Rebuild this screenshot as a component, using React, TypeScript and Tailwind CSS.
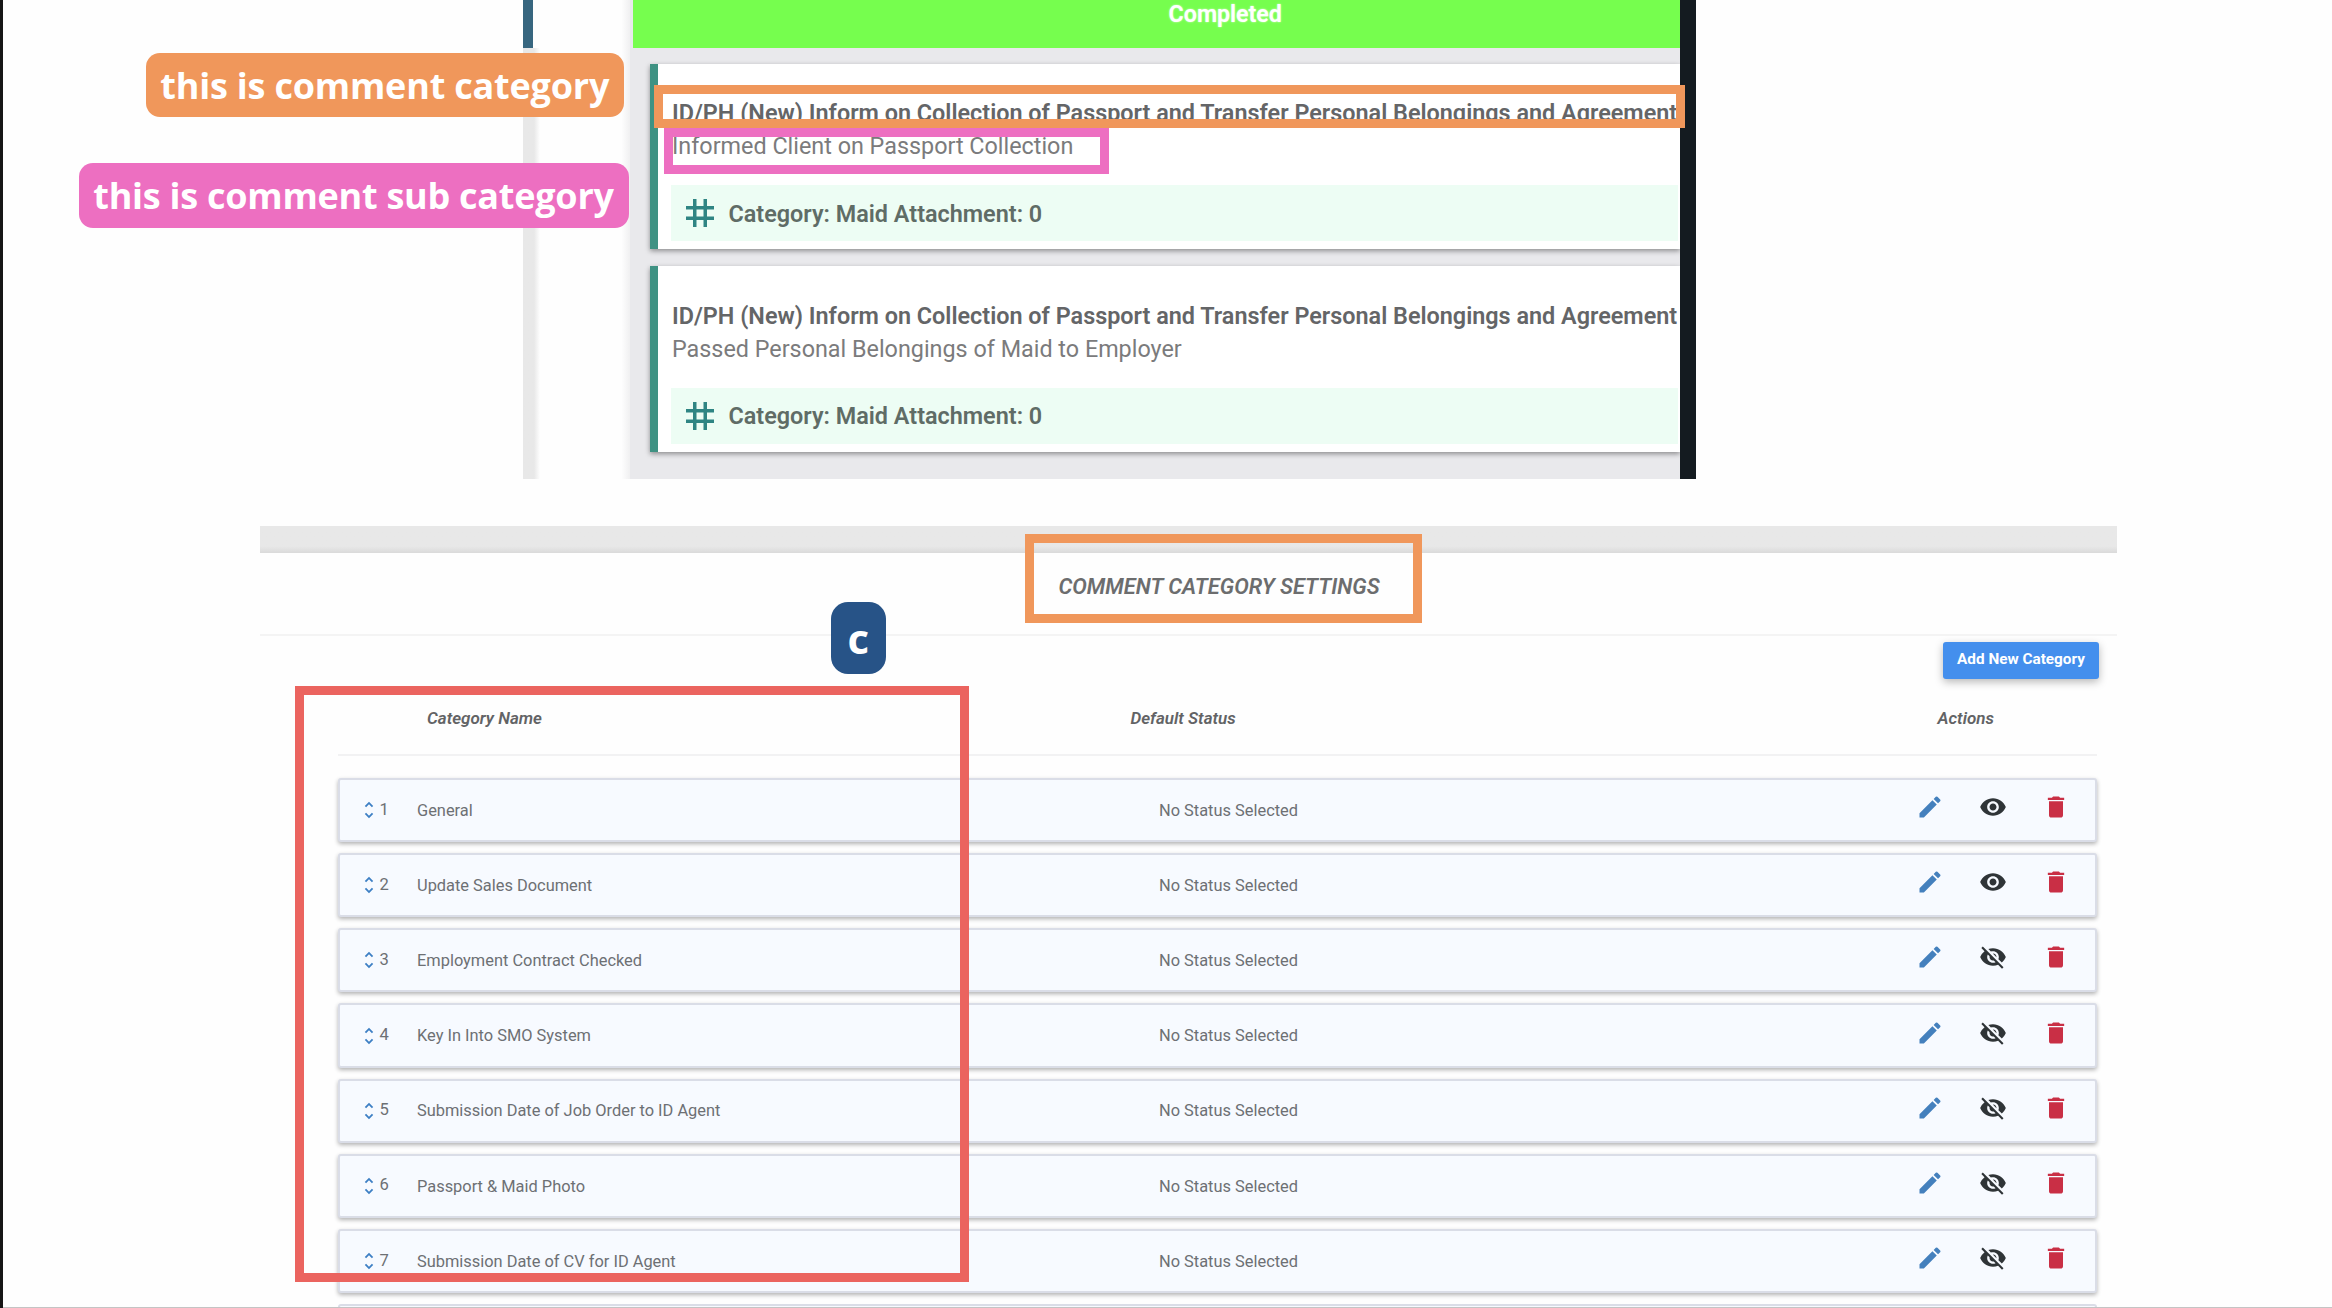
import { MdDelete, MdEdit, MdTag, MdUnfoldMore, MdVisibility, MdVisibilityOff } from "react-icons/md";

const TASK_TITLE =
  "ID/PH (New) Inform on Collection of Passport and Transfer Personal Belongings and Agreement";

const categories = [
  { name: "General", visible: true },
  { name: "Update Sales Document", visible: true },
  { name: "Employment Contract Checked", visible: false },
  { name: "Key In Into SMO System", visible: false },
  { name: "Submission Date of Job Order to ID Agent", visible: false },
  { name: "Passport & Maid Photo", visible: false },
  { name: "Submission Date of CV for ID Agent", visible: false },
];

function TaskCard({ detail }: { detail: string }) {
  return (
    <article className="flex h-[185.5px] flex-col border-l-8 border-[#3f9283] bg-white pt-[33.5px] whitespace-nowrap shadow-[0_2px_5px_rgba(0,0,0,0.4)]">
      <h3 className="pl-3.5 text-[23.4px] leading-[33.4px] font-semibold text-[#646567]">{TASK_TITLE}</h3>
      <p className="pl-3.5 text-[23.35px] leading-[33.4px] text-[#7b7b7c]">{detail}</p>
      <div className="mt-[21.5px] mr-0.5 ml-[13px] flex h-14 items-center bg-[#edfdf4] pl-2">
        <MdTag className="size-[42px] shrink-0 text-[#2f8583]" />
        <span className="ml-[7.5px] pt-0.5 text-[23.4px] font-semibold text-[#5f6c66]">Category: Maid Attachment: 0</span>
      </div>
    </article>
  );
}

function TaskPanel() {
  return (
    <section className="flex h-[478.5px] shrink-0 pl-[523px]">
      <div className="flex w-[107px] flex-col bg-gradient-to-l from-[#f0f0f1] from-0% to-[#fefefe] to-8%">
        <div className="h-12 w-2.5 bg-[#37667f]" />
        <div className="w-[17px] grow bg-gradient-to-r from-[#e8e8e8] from-65% to-[#fefefe]" />
      </div>
      <div className="w-[1050px] overflow-hidden bg-[#e9e9ec]">
        <div className="ml-[2.5px] flex h-12 items-center justify-center bg-[#76fe4e] pb-[19px] pl-[138px] text-[23.2px] font-semibold text-white">
          <span className="[text-shadow:0_0_2px_rgba(255,255,255,0.8)]">Completed</span>
        </div>
        <div className="flex flex-col gap-[17px] pt-[15.5px] pl-5">
          <TaskCard detail="Informed Client on Passport Collection" />
          <TaskCard detail="Passed Personal Belongings of Maid to Employer" />
        </div>
      </div>
      <div className="w-[15.5px] bg-[#141b20]" />
    </section>
  );
}

function CategoryRow({ index, name, visible }: { index: number; name: string; visible: boolean }) {
  const Eye = visible ? MdVisibility : MdVisibilityOff;
  return (
    <li className="flex h-[64.17px] shrink-0 items-center rounded-[3px] border-2 border-[#dadde7] bg-[#f7faff] pl-[17.5px] text-[16.4px] text-[#6d7074] shadow-[0_2px_4px_rgba(0,0,0,0.3)]">
      <MdUnfoldMore className="size-[22px] text-[#3d7fc4]" />
      <span className="w-[37.5px] text-[16.6px]">{index}</span>
      <span className="w-[742px] pt-0.5">{name}</span>
      <span className="grow pt-0.5">No Status Selected</span>
      <span className="flex gap-[35px] pr-[25px] pb-[6px]">
        <MdEdit className="size-7 text-[#4480bd]" />
        <Eye className="size-7 text-[#2f3437]" />
        <MdDelete className="size-7 text-[#c92f45]" />
      </span>
    </li>
  );
}

function CategorySettings() {
  return (
    <section className="mt-[47px] ml-[260px] w-[1857px]">
      <div className="h-[27px] bg-gradient-to-b from-[#e8e8e8] from-75% to-[#dadada]" />
      <h2 className="flex h-[83px] items-center justify-center border-b-2 border-[#f4f4f4] pb-[12px] pl-[61px] text-[21.8px] font-semibold text-[#6c6d6e] italic">
        COMMENT CATEGORY SETTINGS
      </h2>
      <div className="flex justify-end pt-[6px] pr-[18px]">
        <button className="h-[37px] w-[156px] rounded-[3px] bg-[#448fed] pb-px text-[15.3px] font-bold text-white shadow-[0_3px_8px_rgba(0,0,0,0.28)]">
          Add New Category
        </button>
      </div>
      <div className="mr-5 ml-[78px]">
        <div className="grid h-[77px] grid-cols-[703.5px_807px_1fr] items-center border-b-2 border-[#f2f2f3] pt-[5px] pl-[89px] text-[17px] font-semibold text-[#626365] italic">
          <span>Category Name</span>
          <span>Default Status</span>
          <span>Actions</span>
        </div>
        <ul className="mt-[22.5px] flex flex-col gap-[11px]">
          {categories.map((category, i) => (
            <CategoryRow key={category.name} index={i + 1} {...category} />
          ))}
          <li className="h-16 rounded-[3px] border-2 border-[#dadde7] bg-[#f7faff]" />
        </ul>
      </div>
    </section>
  );
}

/** Callouts and highlight frames drawn over the two panels. */
function Annotations() {
  return (
    <div className="pointer-events-none absolute inset-0 font-['Open_Sans',sans-serif] font-bold text-white">
      <div className="absolute top-[128px] left-[664px] h-[46px] w-[445px] border-9 border-[#ed6fc1]" />
      <div className="absolute top-[84.5px] left-[654px] h-[43px] w-[1030.5px] border-9 border-[#f0975b]" />
      <div className="absolute top-[52.5px] left-[146px] flex h-[64.5px] w-[477.5px] items-center justify-center rounded-[14px] bg-[#f0975b] pt-0.5 text-[36px] tracking-[-0.2px] whitespace-nowrap">
        this is comment category
      </div>
      <div className="absolute top-[163px] left-[78.5px] flex h-[64.5px] w-[550px] items-center justify-center rounded-[14px] bg-[#ed6fc1] pt-0.5 text-[36px] tracking-[-0.25px] whitespace-nowrap">
        this is comment sub category
      </div>
      <div className="absolute top-[534px] left-[1024.5px] h-[88.5px] w-[397.5px] border-9 border-[#f0975b]" />
      <div className="absolute top-[686px] left-[295px] h-[596px] w-[674px] border-9 border-[#eb645f]" />
      <div className="absolute top-[601.5px] left-[831px] flex h-[72px] w-[54.5px] items-center justify-center rounded-[17px] bg-[#275387] text-[42px] font-bold">
        c
      </div>
    </div>
  );
}

export default function App() {
  return (
    <main className="relative flex h-[1308px] w-[2332px] flex-col overflow-hidden border-l-3 border-[#161616] bg-[#fefefe] font-[Roboto,sans-serif]">
      <div className="-ml-[3px] flex flex-col">
        <TaskPanel />
        <CategorySettings />
      </div>
      <div className="absolute inset-y-0 right-0 -left-[3px]">
        <Annotations />
      </div>
      <div className="absolute inset-x-0 bottom-0 h-px bg-[#c4c4c4]" />
    </main>
  );
}
